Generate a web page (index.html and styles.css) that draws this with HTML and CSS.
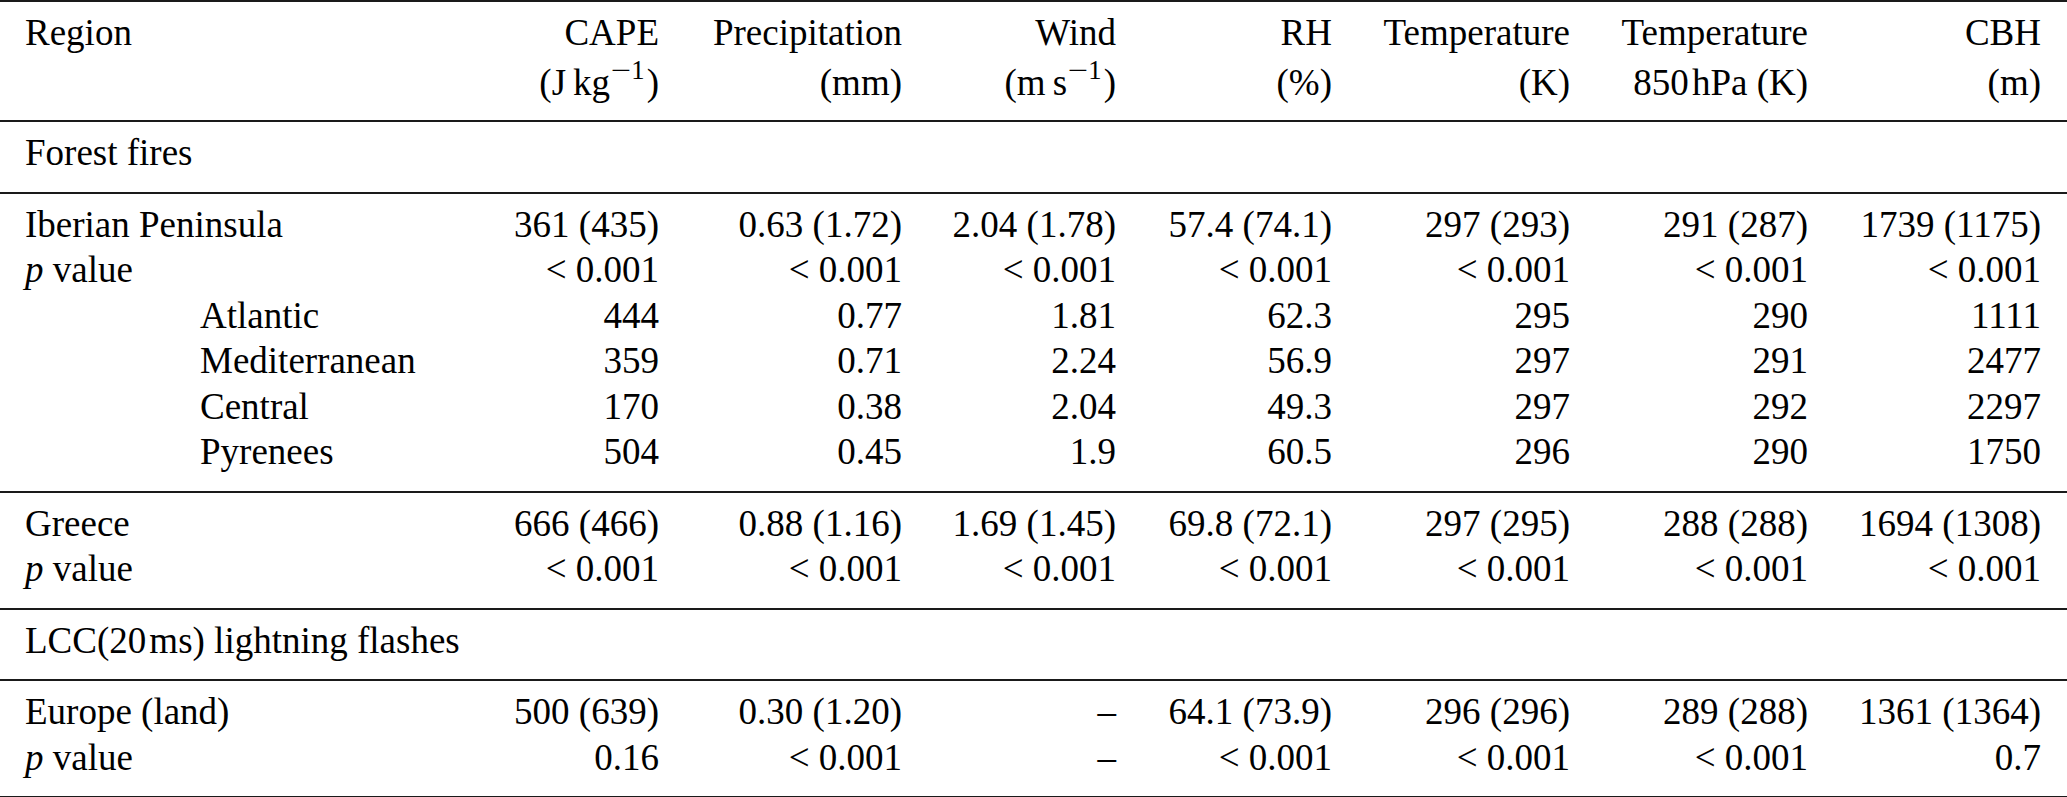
FILE: index.html
```html
<!DOCTYPE html>
<html lang="en">
<head>
<meta charset="utf-8">
<title>Meteorological conditions</title>
<link rel="stylesheet" href="styles.css">
</head>
<body>
<table class="data">
  <colgroup>
    <col class="c-region">
    <col class="c-cape">
    <col class="c-prec">
    <col class="c-wind">
    <col class="c-rh">
    <col class="c-temp">
    <col class="c-t850">
    <col class="c-cbh">
  </colgroup>
  <thead>
    <tr class="first">
      <th class="label">Region</th>
      <th>CAPE</th>
      <th>Precipitation</th>
      <th>Wind</th>
      <th>RH</th>
      <th>Temperature</th>
      <th>Temperature</th>
      <th>CBH</th>
    </tr>
    <tr class="last unit">
      <th class="label"></th>
      <th>(J<span class="thin"></span>kg<sup><span class="minus">−</span>1</sup>)</th>
      <th>(mm)</th>
      <th>(m<span class="thin"></span>s<sup><span class="minus">−</span>1</sup>)</th>
      <th>(%)</th>
      <th>(K)</th>
      <th>850&#8202;hPa (K)</th>
      <th>(m)</th>
    </tr>
  </thead>
  <tbody>
    <tr class="first last">
      <td class="label" colspan="8">Forest fires</td>
    </tr>
  </tbody>
  <tbody>
    <tr class="first">
      <td class="label">Iberian Peninsula</td>
      <td>361 (435)</td><td>0.63 (1.72)</td><td>2.04 (1.78)</td><td>57.4 (74.1)</td><td>297 (293)</td><td>291 (287)</td><td>1739 (1175)</td>
    </tr>
    <tr>
      <td class="label"><i>p</i> value</td>
      <td>&lt; 0.001</td><td>&lt; 0.001</td><td>&lt; 0.001</td><td>&lt; 0.001</td><td>&lt; 0.001</td><td>&lt; 0.001</td><td>&lt; 0.001</td>
    </tr>
    <tr>
      <td class="label sub">Atlantic</td>
      <td>444</td><td>0.77</td><td>1.81</td><td>62.3</td><td>295</td><td>290</td><td>1111</td>
    </tr>
    <tr>
      <td class="label sub">Mediterranean</td>
      <td>359</td><td>0.71</td><td>2.24</td><td>56.9</td><td>297</td><td>291</td><td>2477</td>
    </tr>
    <tr>
      <td class="label sub">Central</td>
      <td>170</td><td>0.38</td><td>2.04</td><td>49.3</td><td>297</td><td>292</td><td>2297</td>
    </tr>
    <tr class="last">
      <td class="label sub">Pyrenees</td>
      <td>504</td><td>0.45</td><td>1.9</td><td>60.5</td><td>296</td><td>290</td><td>1750</td>
    </tr>
  </tbody>
  <tbody>
    <tr class="first">
      <td class="label">Greece</td>
      <td>666 (466)</td><td>0.88 (1.16)</td><td>1.69 (1.45)</td><td>69.8 (72.1)</td><td>297 (295)</td><td>288 (288)</td><td>1694 (1308)</td>
    </tr>
    <tr class="last">
      <td class="label"><i>p</i> value</td>
      <td>&lt; 0.001</td><td>&lt; 0.001</td><td>&lt; 0.001</td><td>&lt; 0.001</td><td>&lt; 0.001</td><td>&lt; 0.001</td><td>&lt; 0.001</td>
    </tr>
  </tbody>
  <tbody>
    <tr class="first last">
      <td class="label" colspan="8">LCC(20&#8202;ms) lightning flashes</td>
    </tr>
  </tbody>
  <tbody>
    <tr class="first">
      <td class="label">Europe (land)</td>
      <td>500 (639)</td><td>0.30 (1.20)</td><td>–</td><td>64.1 (73.9)</td><td>296 (296)</td><td>289 (288)</td><td>1361 (1364)</td>
    </tr>
    <tr class="last">
      <td class="label"><i>p</i> value</td>
      <td>0.16</td><td>&lt; 0.001</td><td>–</td><td>&lt; 0.001</td><td>&lt; 0.001</td><td>&lt; 0.001</td><td>0.7</td>
    </tr>
  </tbody>
</table>
</body>
</html>
```

FILE: styles.css
```css
html, body {
  margin: 0;
  padding: 0;
  background: #ffffff;
}

body {
  color: #000000;
  font-family: "Liberation Serif", "Times New Roman", serif;
  font-size: 37px;
}

.data {
  width: 2067px;
  table-layout: fixed;
  border-collapse: separate;
  border-spacing: 0;
  border-bottom: 2px solid #1a1a1a;
}

.c-region { width: 430px; }
.c-cape { width: 229px; }
.c-prec { width: 243px; }
.c-wind { width: 214px; }
.c-rh { width: 216px; }
.c-temp { width: 238px; }
.c-t850 { width: 238px; }
.c-cbh { width: 259px; }

.data th,
.data td {
  padding: 0;
  font-weight: normal;
  text-align: right;
  vertical-align: top;
  line-height: 45.5px;
  white-space: nowrap;
}

.data th:last-child,
.data td:last-child {
  padding-right: 26px;
}

.data .label {
  text-align: left;
  padding-left: 25px;
}

.data .sub {
  padding-left: 200px;
}

.data tr.first > th,
.data tr.first > td {
  border-top: 2px solid #1a1a1a;
  padding-top: 8px;
}

.data tr.last > th,
.data tr.last > td {
  padding-bottom: 16px;
}

.data tr.unit > th {
  line-height: 54px;
  padding-bottom: 10.5px;
}

.thin {
  display: inline-block;
  width: 7px;
}

.data sup {
  font-size: 0.72em;
  line-height: 0;
  vertical-align: 0.6em;
  padding-right: 2px;
}

.minus {
  display: inline-block;
  width: 0.8em;
  text-align: center;
  transform: scaleX(1.35);
}

.data i {
  font-style: italic;
}
```
